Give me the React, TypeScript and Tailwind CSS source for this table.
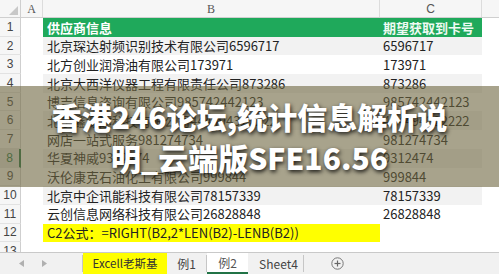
import React from "react";

const rows: { b: string; c: string }[] = [
  { b: "北京琛达射频识别技术有限公司6596717", c: "6596717" },
  { b: "北方创业润滑油有限公司173971", c: "173971" },
  { b: "北京大西洋仪器工程有限责任公司873286", c: "873286" },
  { b: "博吉信息咨询有限公司985742442123", c: "985742442123" },
  { b: "北京鑫源达科技有限公司444494322222", c: "444494322222" },
  { b: "网店一站式服务981274734", c: "981274734" },
  { b: "华夏神威9312474", c: "9312474" },
  { b: "沃伦康克石油化工有限公司999844", c: "999844" },
  { b: "北京中企讯能科技有限公司78157339", c: "78157339" },
  { b: "云创信息网络科技有限公司26828848", c: "26828848" },
];

const font = { fontFamily: '"Noto Sans CJK SC", "Noto Sans", sans-serif' };

function RowHead({ n, active }: { n: number; active?: boolean }) {
  return (
    <div
      className={
        "w-[21px] shrink-0 flex items-center justify-center text-[12px] border-b border-[#e2e2e2] " +
        (active
          ? "bg-[#e2e2e2] text-[#217346] border-r-2 border-r-[#217346]"
          : "bg-[#f6f6f6] text-[#444] border-r border-r-[#cfcfcf]")
      }
      style={{ fontFamily: '"Liberation Sans", sans-serif' }}
    >
      {n}
    </div>
  );
}

export default function App() {
  return (
    <div
      className="relative w-[499px] h-[274px] overflow-hidden bg-white flex flex-col"
      style={font}
    >
      {/* column headers */}
      <div
        className="h-[18px] shrink-0 flex bg-[#f6f6f6] border-b border-[#cfcfcf] text-[12px] text-[#555]"
        style={{ fontFamily: '"Liberation Serif", serif' }}
      >
        <div className="w-[21px] shrink-0 border-r border-[#cfcfcf] relative">
          <svg className="absolute left-[9px] top-[6px]" width="9" height="9" viewBox="0 0 9 9">
            <polygon points="9,0 9,9 0,9" fill="#c8c8c8" />
          </svg>
        </div>
        <div className="w-[22px] shrink-0 border-r border-[#dcdcdc] flex items-center justify-center">A</div>
        <div className="w-[337px] shrink-0 border-r border-[#dcdcdc] flex items-center justify-center">B</div>
        <div className="w-[102px] shrink-0 border-r border-[#dcdcdc] flex items-center justify-center" style={{ fontFamily: '"Liberation Sans", sans-serif' }}>C</div>
        <div className="flex-1" />
      </div>

      {/* body */}
      <div className="flex-1 overflow-hidden flex flex-col text-[13px] text-[#222]">
        <div className="h-[18.7px] shrink-0 flex">
          <RowHead n={1} />
          <div className="w-[22px] shrink-0" />
          <div className="w-[337px] shrink-0 bg-[#1fa95b] text-white font-bold flex items-center pl-[4px]">供应商信息</div>
          <div className="w-[102px] shrink-0 bg-[#1fa95b] text-[#eefaf2] font-bold flex items-center pl-[3px]">期望获取到卡号</div>
          <div className="flex-1" />
        </div>
        {rows.map((r, i) => {
          const n = i + 2;
          const band = n % 2 === 0 ? "bg-[#f2f2f2]" : "bg-white";
          return (
            <div key={n} className="h-[18.7px] shrink-0 flex">
              <RowHead n={n} active={n === 8} />
              <div className="w-[22px] shrink-0" />
              <div className={"w-[337px] shrink-0 flex items-center pl-[4px] whitespace-nowrap overflow-visible " + band}>{r.b}</div>
              <div className={"w-[102px] shrink-0 flex items-center pl-[3px] whitespace-nowrap " + band}>{r.c}</div>
              <div className="flex-1" />
            </div>
          );
        })}
        <div className="h-[18.7px] shrink-0 flex">
          <RowHead n={12} />
          <div className="w-[22px] shrink-0" />
          <div className="w-[337px] shrink-0 bg-[#ffff00] flex items-center pl-[4px] whitespace-nowrap">C2公式：=RIGHT(B2,2*LEN(B2)-LENB(B2))</div>
          <div className="flex-1" />
        </div>
        <div className="h-[18.7px] shrink-0 flex">
          <RowHead n={13} />
          <div className="flex-1" />
        </div>
      </div>

      {/* sheet tabs */}
      <div className="h-[22px] shrink-0 flex items-stretch bg-[#f1f1f1] border-t border-[#c9c9c9] text-[12px] text-[#444]">
        <div className="w-[83px] shrink-0 flex items-center border-r border-[#c6c6c6] my-[2px]">
          <svg className="ml-[19px]" width="5" height="7" viewBox="0 0 5 7">
            <polygon points="5,0 5,7 0,3.5" fill="#b0b0b0" />
          </svg>
          <svg className="ml-[18px]" width="5" height="7" viewBox="0 0 5 7">
            <polygon points="0,0 0,7 5,3.5" fill="#b0b0b0" />
          </svg>
        </div>
        <div className="w-[84px] shrink-0 bg-[#ffff00] flex items-center justify-center text-[#333] text-[11.5px]">Excell老斯基</div>
        <div className="w-[40px] shrink-0 flex items-center justify-center border-r border-[#c6c6c6] my-[2px]">例1</div>
        <div className="w-[41px] shrink-0 bg-white flex items-center justify-center border-b-2 border-[#217346] text-[#555]">例2</div>
        <div className="w-[56px] shrink-0 flex items-center justify-center pl-[6px] border-r border-[#c6c6c6] my-[2px]">Sheet4</div>
        <div className="flex items-center ml-[27px]">
          <svg width="13" height="13" viewBox="0 0 13 13">
            <circle cx="6.5" cy="6.5" r="5.7" fill="none" stroke="#777" strokeWidth="1" />
            <line x1="3.5" y1="6.5" x2="9.5" y2="6.5" stroke="#666" strokeWidth="1.2" />
            <line x1="6.5" y1="3.5" x2="6.5" y2="9.5" stroke="#666" strokeWidth="1.2" />
          </svg>
        </div>
      </div>

      {/* title overlay */}
      <div className="absolute left-0 right-0 top-[86px] h-[101px] bg-[#6e6640]/60 flex flex-col items-center justify-center">
        <div
          className="text-white font-black text-[30px] leading-[41px] text-center whitespace-nowrap [text-shadow:1px_2px_4px_rgba(0,0,0,0.85)]"
          style={font}
        >
          <div>香港246论坛,统计信息解析说</div>
          <div>明_云端版SFE16.56</div>
        </div>
      </div>
    </div>
  );
}
